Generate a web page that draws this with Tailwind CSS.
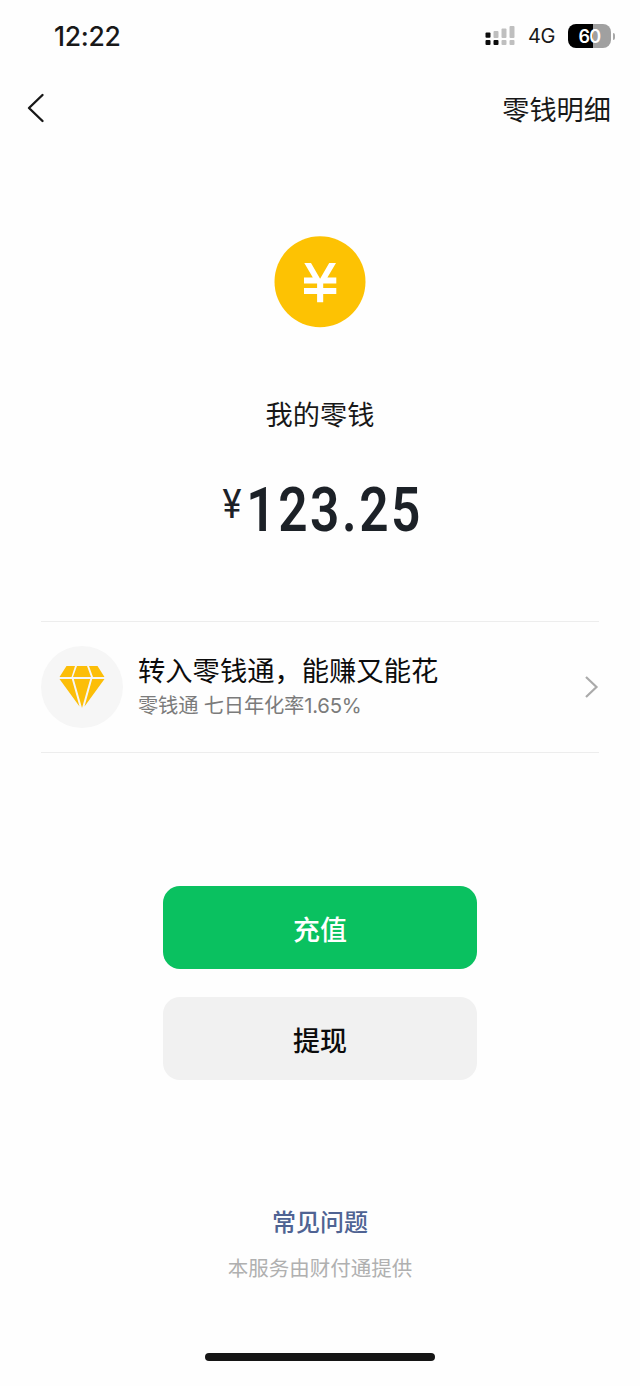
<!DOCTYPE html>
<html lang="zh-CN">
<head>
<meta charset="utf-8">
<meta name="viewport" content="width=device-width">
<title>我的零钱</title>
<script src="https://cdn.jsdelivr.net/npm/@tailwindcss/browser@4"></script>
</head>
<body class="bg-[#fefefe]">
<div class="w-[640px] h-[1386px] overflow-hidden flex flex-col items-center bg-[#fefefe] text-[#181818] font-['Inter','Noto_Sans_CJK_SC',sans-serif]">
  <header class="w-full h-[72px] shrink-0 flex items-center justify-between pl-[54px] pr-[25px]">
    <div class="text-[26.5px] leading-8 font-medium tracking-[-0.3px]">12:22</div>
    <div class="flex items-center h-8">
      <svg class="w-[31px] h-5 mr-3" viewBox="0 0 31 20">
        <g fill="#0c0c0c"><rect x="0.5" y="6.5" width="5" height="5.2" rx="1"/><rect x="0.5" y="14" width="5" height="5" rx="1"/><rect x="8.5" y="14" width="5" height="5" rx="1"/></g>
        <g fill="#bfbfbf"><rect x="8.5" y="5" width="5" height="7" rx="1"/><rect x="16.5" y="2.5" width="5" height="9.5" rx="1"/><rect x="24.5" y="0" width="5" height="12" rx="1"/><rect x="16.5" y="14" width="5" height="5" rx="1"/><rect x="24.5" y="14" width="5" height="5" rx="1"/></g>
      </svg>
      <div class="text-[20px] w-[28px] tracking-[-0.4px] mr-3 whitespace-nowrap">4G</div>
      <div class="w-[43px] h-6 rounded-lg flex items-center justify-center text-[18px] pt-px font-semibold tracking-[-0.8px] text-white bg-linear-to-r from-black from-58% to-[#a0a0a0] to-58%">60</div>
      <div class="w-[2px] h-[7px] ml-[2px] rounded-r-full bg-[#a8a8a8]"></div>
    </div>
  </header>
  <nav class="w-full h-[72px] shrink-0 flex items-center justify-between pl-[26px] pr-[29px]">
    <svg class="w-5 h-8" viewBox="0 0 20 32" fill="none" stroke="#181818" stroke-width="2.4" stroke-linecap="round" stroke-linejoin="round"><path d="M16.5 3 L3 16 L16.5 29"/></svg>
    <div class="text-[27.2px] leading-9 pt-[5px]">零钱明细</div>
  </nav>
  <svg class="w-[92px] h-[92px] mt-[92px] shrink-0" viewBox="0 0 92 92"><circle cx="46" cy="45.7" r="45.5" fill="#fdc203"/><path fill="#fff" d="M30.3 27H37L46.1 42.8L55.2 27H62L53.4 41.5H62.3V47.5H49.2V52.1H62.3V58H49.2V66.3H43.1V58H30V52.1H43.1V47.5H30V41.5H38.8Z"/></svg>
  <h1 class="mt-[68px] h-10 text-[27.2px] leading-10 shrink-0">我的零钱</h1>
  <div class="mt-[44px] h-[60px] w-[200px] shrink-0 flex items-start justify-center text-[#1c2127] whitespace-nowrap font-['Roboto',sans-serif]">
    <span class="text-[40px] leading-[49px] font-normal scale-x-90 w-[24px] flex justify-center">¥</span>
    <span class="w-[176px] flex justify-center"><span class="text-[60.5px] leading-[62px] font-semibold scale-x-85 tracking-[3px] pl-[5px]">123.25</span></span>
  </div>
  <section class="mt-[81px] w-[558px] h-[132px] shrink-0 border-y border-[#ededed] flex items-center">
    <div class="w-[82px] h-[82px] rounded-full bg-[#f6f6f6] flex items-center justify-center">
      <svg class="w-[46px] h-[44px]" viewBox="0 0 46 44" fill="#fcbe08"><path d="M7.5 1H16L12.5 12H.5ZM18 1H28L32 12H14ZM30 1H38.5L45.5 12H34ZM.5 14H12.8L20.5 41.5ZM14.8 14H31.2L23 43ZM33.2 14H45.5L25.5 41.5Z"/></svg>
    </div>
    <div class="ml-[15px] flex-1 pt-px">
      <div class="text-[27.3px] leading-9 text-[#0c0c0c]">转入零钱通，能赚又能花</div>
      <div class="text-[20.3px] leading-8 text-[#7b7b7b] tracking-[-0.2px]">零钱通 七日年化率1.65%</div>
    </div>
    <svg class="w-4 h-6" viewBox="0 0 16 24" fill="none" stroke="#aaa" stroke-width="2.2"><path d="M3 2 L13.5 12 L3 22"/></svg>
  </section>
  <button class="mt-[133px] w-[314px] h-[83px] shrink-0 rounded-[17px] bg-[#0ac160] text-white text-[27px] font-medium pt-[8px]">充值</button>
  <button class="mt-[28px] w-[314px] h-[83px] shrink-0 rounded-[17px] bg-[#f1f1f1] text-[#0c0c0c] text-[27px] font-medium pt-[8px]">提现</button>
  <a class="mt-[125px] h-9 leading-9 text-[24px] font-medium text-[#4f6393] shrink-0">常见问题</a>
  <p class="mt-[12px] h-8 leading-8 text-[20.5px] text-[#b0b0b0] shrink-0">本服务由财付通提供</p>
  <div class="mt-[68px] w-[230px] h-2 rounded-full bg-[#151515] shrink-0"></div>
</div>
</body>
</html>
